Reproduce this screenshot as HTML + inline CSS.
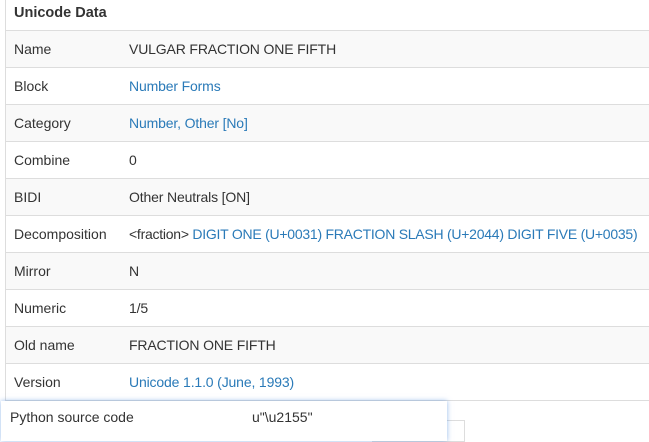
<!DOCTYPE html>
<html><head><style>
body{margin:0;width:649px;height:432px;overflow:hidden;background:#fff;font-family:"Liberation Sans",sans-serif;font-size:14px;color:#333;position:relative}
.t{position:absolute;left:5px;top:0;width:660px;border-left:1px solid #ddd}
.r{height:36px;border-bottom:1px solid #ddd;position:relative;line-height:36px}
.r.o{background:#f9f9f9}
.h{height:30px;line-height:26px;font-weight:bold;font-size:14.5px;padding-left:8px;border-bottom:1px solid #ddd}
.k{position:absolute;left:8px}
.v{position:absolute;left:123px;white-space:nowrap;letter-spacing:-0.15px}
.d{letter-spacing:-0.25px}
a{color:#2a7ab8;text-decoration:none}
.pop{position:absolute;left:1px;top:401px;width:446px;height:40px;background:#fff;box-shadow:0 0 5px rgba(80,140,220,.6);line-height:32px}
.box{position:absolute;left:372px;top:420px;width:91px;height:20px;border:1px solid #ddd}
</style></head><body>
<div class="t">
<div class="h">Unicode Data</div>
<div class="r o"><span class="k">Name</span><span class="v">VULGAR FRACTION ONE FIFTH</span></div>
<div class="r"><span class="k">Block</span><span class="v"><a>Number Forms</a></span></div>
<div class="r o"><span class="k">Category</span><span class="v"><a>Number, Other [No]</a></span></div>
<div class="r"><span class="k">Combine</span><span class="v">0</span></div>
<div class="r o"><span class="k">BIDI</span><span class="v">Other Neutrals [ON]</span></div>
<div class="r"><span class="k">Decomposition</span><span class="v d">&lt;fraction&gt; <a>DIGIT ONE (U+0031) FRACTION SLASH (U+2044) DIGIT FIVE (U+0035)</a></span></div>
<div class="r o"><span class="k">Mirror</span><span class="v">N</span></div>
<div class="r"><span class="k">Numeric</span><span class="v">1/5</span></div>
<div class="r o"><span class="k">Old name</span><span class="v">FRACTION ONE FIFTH</span></div>
<div class="r"><span class="k">Version</span><span class="v"><a>Unicode 1.1.0 (June, 1993)</a></span></div>
</div>
<div class="box"></div>
<div class="pop"><span style="position:absolute;left:9px">Python source code</span><span style="position:absolute;left:251px">u"\u2155"</span></div>
</body></html>
